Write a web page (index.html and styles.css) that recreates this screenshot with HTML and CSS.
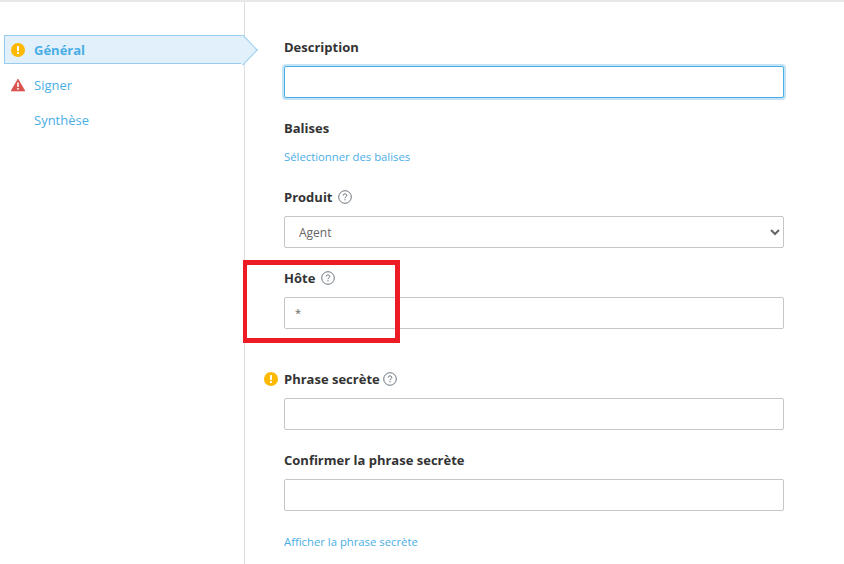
FILE: index.html
```html
<!DOCTYPE html>
<html lang="fr">
<head>
<meta charset="utf-8">
<title>Général</title>
<link rel="stylesheet" href="styles.css">
</head>
<body>
<div class="page">
  <nav class="side">
    <a class="step active">
      <svg class="ico" viewBox="0 0 14 14"><circle cx="7" cy="7" r="7" fill="#fdb900"/><rect x="6" y="3" width="2" height="5" rx=".6" fill="#fff"/><rect x="6" y="9" width="2" height="2" rx=".6" fill="#fff"/></svg>
      <span>Général</span>
    </a>
    <a class="step">
      <svg class="ico" viewBox="0 0 14 14"><path d="M7 1 14 13H0Z" fill="#d9534f" stroke="#d9534f" stroke-linejoin="round" stroke-width=".6"/><rect x="6.2" y="4.6" width="1.6" height="4.4" fill="#fff"/><rect x="6.2" y="10" width="1.6" height="1.7" fill="#fff"/></svg>
      <span>Signer</span>
    </a>
    <a class="step">
      <span class="ico"></span>
      <span>Synthèse</span>
    </a>
  </nav>
  <main class="form">
    <section class="field f-desc">
      <label class="lab">Description</label>
      <input class="box focus" type="text">
    </section>
    <section class="field f-tags">
      <label class="lab">Balises</label>
      <a class="link">Sélectionner des balises</a>
    </section>
    <section class="field f-prod">
      <label class="lab">Produit <svg class="help" viewBox="0 0 14 14"><circle cx="7" cy="7" r="6.3" fill="none" stroke="#5b6770" stroke-width=".9"/><path d="M5.2 5.5C5.2 4.4 6 3.9 7 3.9s1.8.6 1.8 1.5c0 1.3-1.8 1.3-1.8 2.8" fill="none" stroke="#5b6770"/><rect x="6.5" y="9.2" width="1" height="1.1" fill="#5b6770"/></svg></label>
      <select class="box sel"><option>Agent</option></select>
    </section>
    <section class="field f-host">
      <label class="lab">Hôte <svg class="help" viewBox="0 0 14 14"><circle cx="7" cy="7" r="6.3" fill="none" stroke="#5b6770" stroke-width=".9"/><path d="M5.2 5.5C5.2 4.4 6 3.9 7 3.9s1.8.6 1.8 1.5c0 1.3-1.8 1.3-1.8 2.8" fill="none" stroke="#5b6770"/><rect x="6.5" y="9.2" width="1" height="1.1" fill="#5b6770"/></svg></label>
      <input class="box star" type="text" value="*">
    </section>
    <section class="field f-pass">
      <label class="lab">
        <svg class="warn" viewBox="0 0 14 14"><circle cx="7" cy="7" r="7" fill="#fdb900"/><rect x="6" y="3" width="2" height="5" rx=".6" fill="#fff"/><rect x="6" y="9" width="2" height="2" rx=".6" fill="#fff"/></svg>
        Phrase secrète <svg class="help" viewBox="0 0 14 14"><circle cx="7" cy="7" r="6.3" fill="none" stroke="#5b6770" stroke-width=".9"/><path d="M5.2 5.5C5.2 4.4 6 3.9 7 3.9s1.8.6 1.8 1.5c0 1.3-1.8 1.3-1.8 2.8" fill="none" stroke="#5b6770"/><rect x="6.5" y="9.2" width="1" height="1.1" fill="#5b6770"/></svg>
      </label>
      <input class="box" type="password">
    </section>
    <section class="field f-conf">
      <label class="lab">Confirmer la phrase secrète</label>
      <input class="box" type="password">
    </section>
    <a class="link show">Afficher la phrase secrète</a>
  </main>
  <div class="mark"></div>
</div>
</body>
</html>
```
FILE: styles.css
```css
* { box-sizing: border-box; }
html, body { margin: 0; height: 100%; overflow: hidden; background: #fff; }
body { font-family: "Open Sans", "Noto Sans", sans-serif; font-size: 13px; color: #333; }
.page { position: relative; display: flex; height: 564px; border-top: 2px solid #e8e8e8; }
.side { width: 245px; flex: none; border-right: 1px solid #dedede; padding: 33px 0 0 4px; }
.step { position: relative; display: flex; align-items: center; gap: 9px; height: 29px; margin-bottom: 6px; padding-left: 6px; font-size: 13px; color: #4aaee6; border: 1px solid transparent; }
.step.active { width: 240px; background: #e1f0fa; border-color: #97ccee; border-right: 0; font-weight: 700; }
.step.active::after { content: ""; position: absolute; right: -10px; top: 3px; width: 21px; height: 21px; background: #e1f0fa; border: solid #97ccee; border-width: 1px 1px 0 0; transform: scaleX(.95) rotate(45deg); }
.step span { position: relative; z-index: 1; }
.ico { width: 14px; height: 14px; flex: none; display: block; }
.form { width: 500px; margin-left: 39px; display: flex; flex-direction: column; }
.field { display: flex; flex-direction: column; }
.lab { position: relative; display: flex; align-items: center; gap: 5px; height: 18px; font-size: 13px; font-weight: 700; color: #333; }
.f-host .lab { gap: 6px; }
.f-pass .lab { gap: 3px; }
.help { width: 14px; height: 14px; flex: none; }
.warn { position: absolute; left: -20px; top: 2px; width: 14px; height: 14px; }
.box { display: block; width: 500px; height: 32px; margin: 0; margin-top: 10px; padding: 0 14px; background: #fff; border: 1px solid #c6c6c6; border-radius: 2px; font-family: inherit; font-size: 12px; color: #666; outline: none; }
.box.focus { border-color: #4aaee6; box-shadow: 0 0 0 2px #c4e3f7; }
.box.star { padding: 0 10px 2px; font-size: 11px; }
.sel { padding-left: 10px; }
.link { font-size: 11.3px; line-height: 17px; color: #4aaee6; }
.f-desc { margin-top: 36px; }
.f-tags { margin-top: 21px; }
.f-tags .link { margin-top: 11px; }
.f-prod { margin-top: 23px; }
.f-host { margin-top: 21px; }
.f-pass { margin-top: 41px; }
.f-conf { margin-top: 21px; }
.show { margin-top: 22px; }
.mark { position: absolute; left: 243px; top: 258px; width: 157px; height: 83px; border: 5px solid #ed1c24; border-left-width: 4px; pointer-events: none; }
```
